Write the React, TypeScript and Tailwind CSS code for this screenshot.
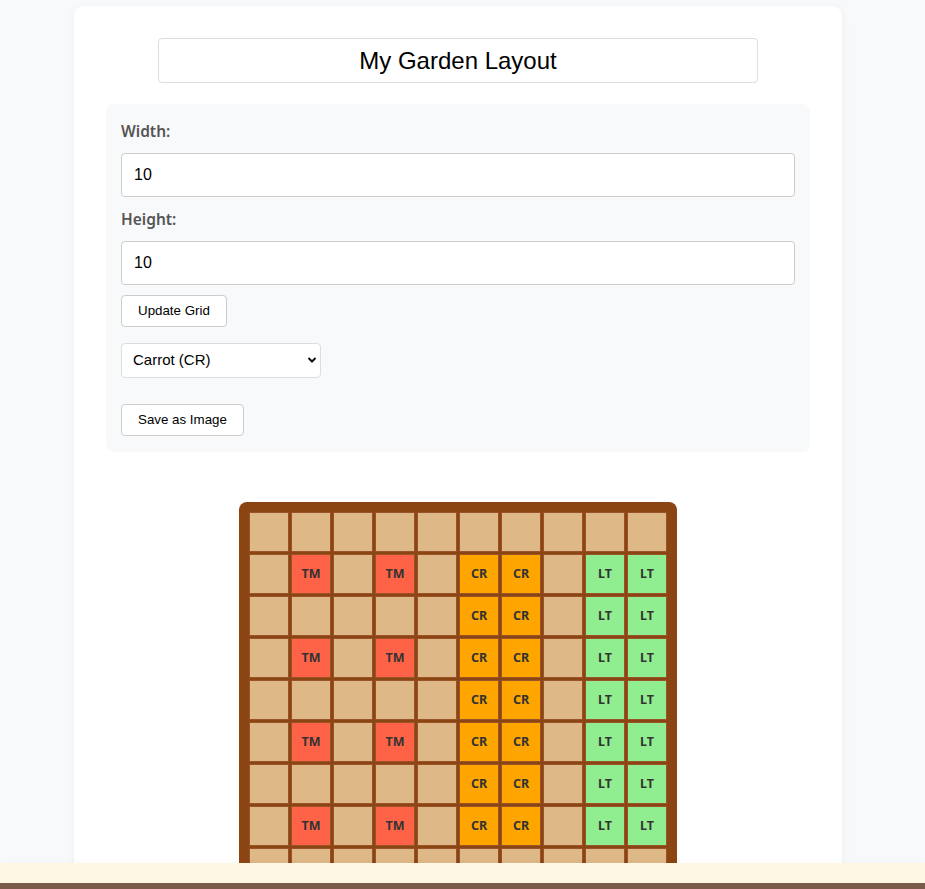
import React from "react";

type Plant = "TM" | "CR" | "LT" | null;

const colors: Record<string, string> = {
  TM: "bg-[#ff6347]",
  CR: "bg-[#ffa500]",
  LT: "bg-[#90ee90]",
};

function cellAt(r: number, c: number): Plant {
  if (r >= 1 && r <= 7) {
    if (r % 2 === 1 && (c === 1 || c === 3)) return "TM";
    if (c === 5 || c === 6) return "CR";
    if (c === 8 || c === 9) return "LT";
  }
  return null;
}

export default function App() {
  const rows = Array.from({ length: 10 }, (_, r) => r);
  const cols = Array.from({ length: 10 }, (_, c) => c);
  return (
    <div className="min-h-screen bg-[#f8f9fa] pt-[6px] pl-[74px]" style={{ fontFamily: '"Liberation Sans", Arial, sans-serif' }}>
      <div className="w-[768px] bg-white rounded-[10px] shadow-[0_2px_10px_rgba(0,0,0,0.05)] px-[32px] pt-[32px] pb-[40px]">
        <input
          readOnly
          value="My Garden Layout"
          className="block mx-auto w-[600px] h-[45px] border border-[#dddddd] rounded-[4px] text-center text-[24px] text-black bg-white outline-none"
        />
        <div className="mt-[21px] bg-[#f8f9fa] rounded-[8px] px-[15px] pt-[15px] pb-[16px]">
          <label className="block h-[24px] leading-[24px] mb-[10px] text-[15.5px] font-semibold text-[#555]" style={{ fontFamily: '"Noto Sans", sans-serif' }}>
            Width:
          </label>
          <input readOnly value="10" className="block w-full h-[44px] mb-[10px] border border-[#cccccc] rounded-[4px] px-[12px] text-[16px] text-black bg-white outline-none" />
          <label className="block h-[24px] leading-[24px] mb-[10px] text-[15.5px] font-semibold text-[#555]" style={{ fontFamily: '"Noto Sans", sans-serif' }}>
            Height:
          </label>
          <input readOnly value="10" className="block w-full h-[44px] mb-[10px] border border-[#cccccc] rounded-[4px] px-[12px] text-[16px] text-black bg-white outline-none" />
          <button className="block h-[32px] px-[16px] border border-[#cccccc] rounded-[4px] bg-white text-[13.33px] text-black">
            Update Grid
          </button>
          <div className="relative mt-[16px] w-[200px] h-[35px]">
            <div className="w-full h-full border border-[#dddddd] rounded-[4px] bg-white pl-[11px] flex items-center text-[15px] text-black">
              Carrot (CR)
            </div>
            <svg className="absolute right-[4px] top-[13px]" width="10" height="8" viewBox="0 0 10 8">
              <path d="M1.5 2 L5 5.5 L8.5 2" fill="none" stroke="#111" strokeWidth="2" />
            </svg>
          </div>
          <button className="block mt-[26px] h-[32px] px-[16px] border border-[#cccccc] rounded-[4px] bg-white text-[13.33px] text-black">
            Save as Image
          </button>
        </div>
        <div className="mt-[50px] flex justify-center">
          <div className="grid grid-cols-10 gap-[2px] p-[10px] bg-[#8b4513] rounded-[8px]">
            {rows.map((r) =>
              cols.map((c) => {
                const p = cellAt(r, c);
                return (
                  <div
                    key={`${r}-${c}`}
                    className={`w-[40px] h-[40px] border border-[#9a5228] flex items-center justify-center text-[12.5px] font-bold text-[#333] ${p ? colors[p] : "bg-[#deb887]"}`}
                    style={{ fontFamily: '"Noto Sans", sans-serif' }}
                  >
                    {p}
                  </div>
                );
              })
            )}
          </div>
        </div>
      </div>
      <div className="fixed left-0 right-0 bottom-0 h-[26px] bg-[#fef7e4] border-b-[6px] border-[#7a5a4a] shadow-[0_-2px_4px_rgba(0,0,0,0.02)]" />
    </div>
  );
}
